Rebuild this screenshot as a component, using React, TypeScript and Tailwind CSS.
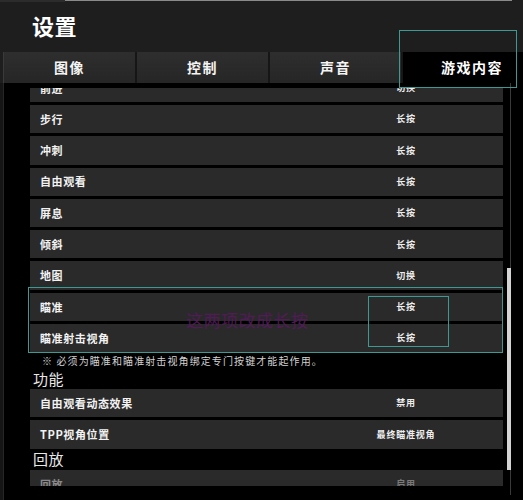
import React from 'react';

const FONT = { fontFamily: '"Noto Sans CJK SC", "Noto Sans", sans-serif' };

interface Row {
  label: string;
  value: string;
  dim?: boolean;
}

const tabs = ['图像', '控制', '声音'];

const controlRows: Row[] = [
  { label: '前进', value: '切换' },
  { label: '步行', value: '长按' },
  { label: '冲刺', value: '长按' },
  { label: '自由观看', value: '长按' },
  { label: '屏息', value: '长按' },
  { label: '倾斜', value: '长按' },
  { label: '地图', value: '切换' },
  { label: '瞄准', value: '长按' },
  { label: '瞄准射击视角', value: '长按' },
];

const featureRows: Row[] = [
  { label: '自由观看动态效果', value: '禁用' },
  { label: 'TPP视角位置', value: '最终瞄准视角' },
];

function SettingRow({ row }: { row: Row }) {
  return (
    <div className="flex items-center h-[28.3px] shrink-0 bg-[#2a2a2a] pl-[10px] pr-[37px]">
      <span
        className={`flex-1 text-[11px] font-bold tracking-[0.6px] ${
          row.dim ? 'text-[#8a8a8a]' : 'text-[#f2f2f2]'
        }`}
      >
        {row.label}
      </span>
      <span
        className={`w-[120px] text-center text-[9px] font-bold tracking-[0.8px] ${
          row.dim ? 'text-[#7a7a7a]' : 'text-[#eeeeee]'
        }`}
      >
        {row.value}
      </span>
    </div>
  );
}

export default function App() {
  return (
    <div className="relative w-[523px] h-[500px] bg-black overflow-hidden flex flex-col" style={FONT}>
      {/* header */}
      <div className="relative h-[52px] shrink-0 bg-[#1e1e1e]">
        <div className="flex h-[2px]">
          <div className="w-[65px] bg-[#2c2c2c]" />
          <div className="w-[447px] border-t border-[#8a8a8a]" />
        </div>
        <div className="pl-[32px] pt-[10px] text-[22px] leading-[26px] font-bold text-white tracking-[0.5px]">
          设置
        </div>
      </div>

      {/* tabs */}
      <div className="flex h-[31px] shrink-0 bg-[#1e1e1e]">
        <div className="w-[4px] border-r border-[#3a3a3a]" />
        {tabs.map((t) => (
          <div
            key={t}
            className="w-[133px] flex items-center justify-center bg-gradient-to-b from-[#2e2e2e] to-[#262626] border-r-2 border-[#161616] text-[14px] font-bold tracking-[1.5px] text-[#f4f4f4]"
          >
            {t}
          </div>
        ))}
        <div className="w-[109px] bg-black flex items-center justify-end pr-[9px] text-[14px] font-bold tracking-[1.5px] text-white">
          游戏内容
        </div>
        <div className="flex-1 bg-black" />
      </div>

      {/* content */}
      <div className="flex h-[403px] shrink-0">
        <div className="w-[4px] bg-[#151515] border-r border-[#262626]" />
        <div className="w-[26px]" />
        <div className="w-[473px] flex flex-col">
          <div className="h-[5px] shrink-0" />
          <div className="flex-1 overflow-hidden">
            <div className="flex flex-col mt-[-14.3px]">
              <div className="flex flex-col gap-[3px]">
                {controlRows.map((r) => (
                  <SettingRow key={r.label} row={r} />
                ))}
              </div>
              <div className="h-[17px] flex items-center pl-[12px] text-[10px] tracking-[1.1px] text-[#d2d2d2]">
                ※ 必须为瞄准和瞄准射击视角绑定专门按键才能起作用。
              </div>
              <div className="h-[19.6px] flex items-center pl-[3px] text-[15px] text-[#e8e8e8] tracking-[0.5px]">
                功能
              </div>
              <div className="flex flex-col gap-[3px]">
                {featureRows.map((r) => (
                  <SettingRow key={r.label} row={r} />
                ))}
              </div>
              <div className="h-[21.4px] flex items-center pl-[3px] text-[15px] text-[#e8e8e8] tracking-[0.5px]">
                回放
              </div>
              <SettingRow row={{ label: '回放', value: '启用', dim: true }} />
            </div>
          </div>
        </div>
        <div className="w-[4px]" />
        {/* scrollbar */}
        <div className="relative w-[4px]">
          <div className="absolute left-[3px] top-0 bottom-[-9px] w-px bg-[#3a3a3a]" />
          <div className="absolute left-0 top-[185px] h-[202px] w-[4px] bg-[#d4d4d4]" />
        </div>
      </div>
      <div className="flex-1 flex">
        <div className="w-[4px] bg-[#151515] border-r border-[#262626]" />
      </div>

      {/* annotations */}
      <div className="absolute left-[399px] top-[30px] w-[118px] h-[58px] border border-[#3d9a92]" />
      <div className="absolute left-[28px] top-[287px] w-[475px] h-[66px] border border-[#3d9a92]" />
      <div className="absolute left-[368px] top-[296px] w-[81px] h-[51px] border border-[#3d9a92]" />
      <div className="absolute left-[186px] top-[308px] text-[17px] leading-[24px] text-[#561a5e] tracking-[0.5px] opacity-90">
        这两项改成长按
      </div>
    </div>
  );
}
